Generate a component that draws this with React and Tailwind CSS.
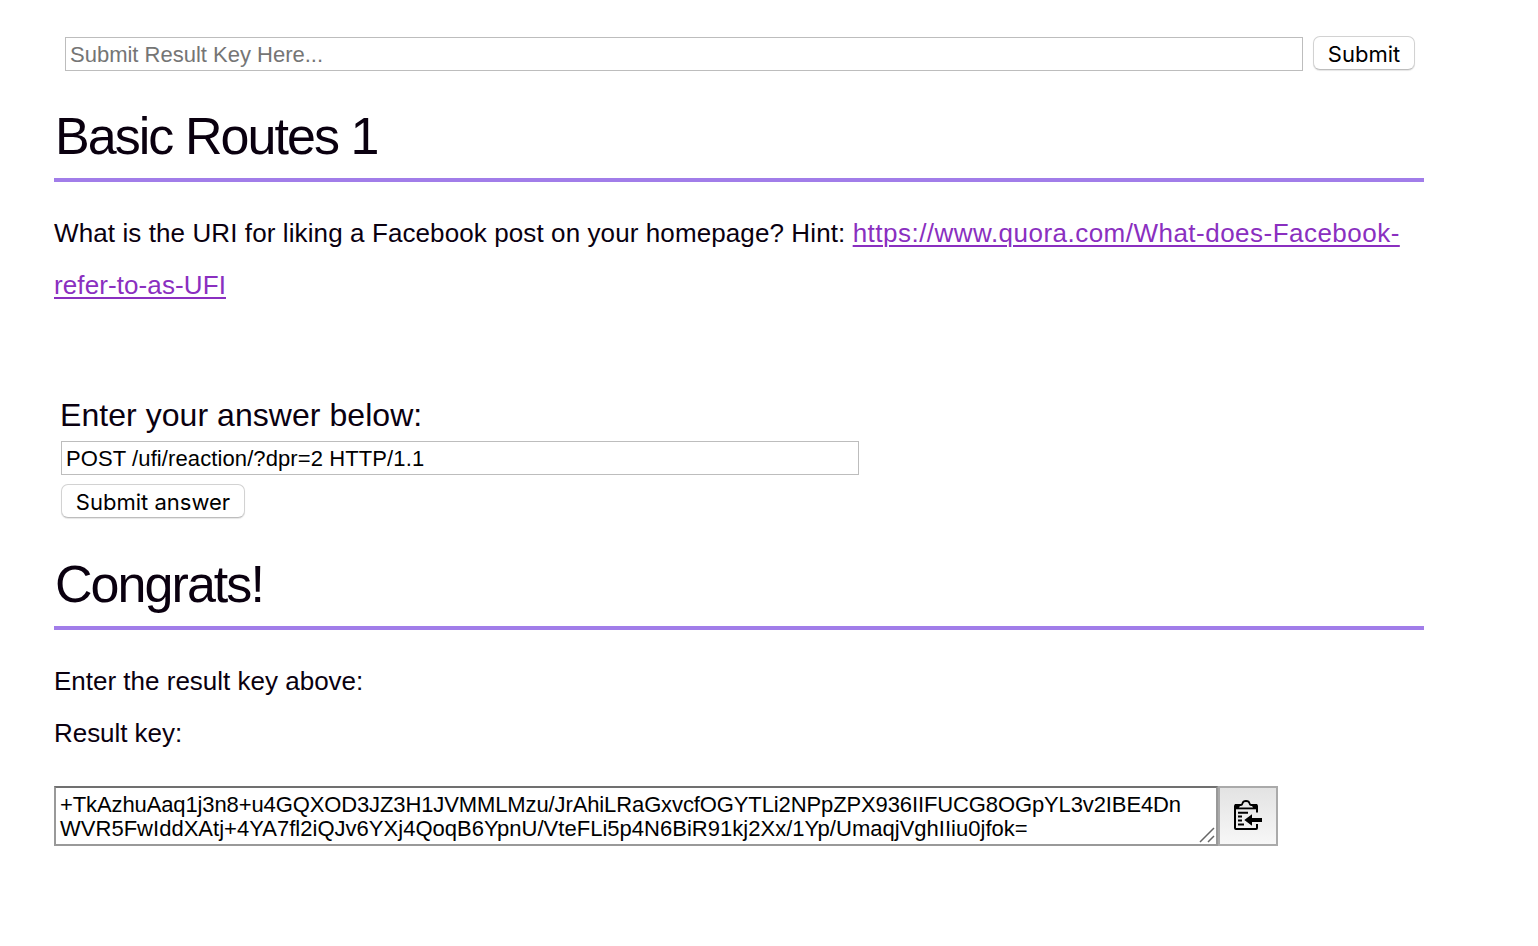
const keyLines = [
  "+TkAzhuAaq1j3n8+u4GQXOD3JZ3H1JVMMLMzu/JrAhiLRaGxvcfOGYTLi2NPpZPX936IIFUCG8OGpYL3v2IBE4Dn",
  "WVR5FwIddXAtj+4YA7fl2iQJv6YXj4QoqB6YpnU/VteFLi5p4N6BiR91kj2Xx/1Yp/UmaqjVghIIiu0jfok=",
];

function PushButton({ className, children }) {
  return (
    <button
      className={
        "mb-px flex h-[34px] items-center justify-center whitespace-nowrap rounded-[7px] border border-[#d2d2d2] border-b-[#bdbdbd] bg-white pt-px font-['Inter','Liberation_Sans',sans-serif] text-[22px] leading-none text-black shadow-[0_1px_1px_rgba(0,0,0,0.1)] " +
        className
      }
    >
      {children}
    </button>
  );
}

function Heading({ children }) {
  return (
    <h1 className="h-[92px] border-b-4 border-[#a17de9] pl-px text-[52px] leading-[92px] tracking-[-1.95px] whitespace-nowrap text-[#0a000f]">
      {children}
    </h1>
  );
}

function PasteIcon() {
  return (
    <svg width="30" height="32" viewBox="0 0 30 32" fill="none" stroke="#000">
      <path d="M24 12.500V6Q24 5 23 5H3Q2 5 2 6V28Q2 29 3 29H23Q24 29 24 28V24" strokeWidth="2" />
      <path d="M2 4H24V9.300H2Z" fill="#000" stroke="none" />
      <path d="M6 7.600Q6.500 5.500 9 5H17Q19.500 5.500 20 7.600Z" fill="#e9e9e9" stroke="none" />
      <path d="M5 5H7.800Q9.300 5 9.600 3.200Q10 1 13 1Q16 1 16.400 3.200Q16.700 5 18.200 5H21" fill="#e9e9e9" strokeWidth="1.800" />
      <path d="M5 12.700H15M5 16.500H9M5 20.500H9M5 24.500H11" strokeWidth="2" />
      <path d="M11.300 20L19 14.300V18H29V22H19V25.700Z" fill="#000" stroke="none" />
    </svg>
  );
}

export default function App() {
  return (
    <main className="h-[946px] w-full overflow-hidden bg-white pl-[54px] font-['Liberation_Sans',Arial,sans-serif] text-[26px] text-[#0a000f]">
      <div className="w-[1370px]">
        <form className="flex gap-[10px] pl-[11px] pt-9">
          <input
            className="mt-px h-[34px] w-[1238px] border border-[#bdbdbd] px-1 pt-[2px] text-[22px] outline-none placeholder:text-[#757575]"
            placeholder="Submit Result Key Here..."
          />
          <PushButton className="w-[102px]">Submit</PushButton>
        </form>
        <div className="pt-[19px]">
          <Heading>Basic Routes 1</Heading>
        </div>
        <p className="mt-[25px] h-[104px] whitespace-nowrap leading-[52px] tracking-[0.1px]">
          <span>What is the URI for liking a Facebook post on your homepage? Hint: </span>
          <a className="text-[#8a2fc0] underline decoration-2 underline-offset-[3px]">
            <span className="tracking-[0.48px]">https://www.quora.com/What-does-Facebook-</span>
            <br />
            <span>refer-to-as-UFI</span>
          </a>
        </p>
        <form className="flex flex-col items-start pl-[7px] pt-[79px]">
          <label className="-ml-px h-[50px] whitespace-nowrap text-[32px] leading-[50px] tracking-[0.05px]">
            Enter your answer below:
          </label>
          <input
            className="mt-px h-[34px] w-[798px] border border-[#bdbdbd] px-1 pt-[2px] text-[22px] tracking-[0.1px] text-black outline-none"
            defaultValue="POST /ufi/reaction/?dpr=2 HTTP/1.1"
          />
          <PushButton className="mt-[9px] w-[184px]">Submit answer</PushButton>
        </form>
        <div className="pt-[19px]">
          <Heading>Congrats!</Heading>
        </div>
        <p className="mt-[25px] leading-[52px]">Enter the result key above:</p>
        <p className="leading-[52px] tracking-[-0.05px]">Result key:</p>
        <div className="mt-[27px] flex h-[60px]">
          <div className="relative w-[1164px] whitespace-nowrap border-2 border-[#999] border-t-[#707070] pl-1 pt-[5px] text-[22px] leading-6 text-black">
            <div className="tracking-[-0.114px]">{keyLines[0]}</div>
            <div className="tracking-[0.02px]">{keyLines[1]}</div>
            <svg className="absolute bottom-0 right-0" width="18" height="18" viewBox="0 0 18 18" stroke="#666" strokeWidth="1.500">
              <path d="M2 16L16 2M10 16L16 10" />
            </svg>
          </div>
          <button className="flex w-[60px] items-center justify-center border-2 border-[#aaa] bg-linear-to-b from-[#e3e3e3] to-[#f7f7f7]">
            <PasteIcon />
          </button>
        </div>
      </div>
    </main>
  );
}
